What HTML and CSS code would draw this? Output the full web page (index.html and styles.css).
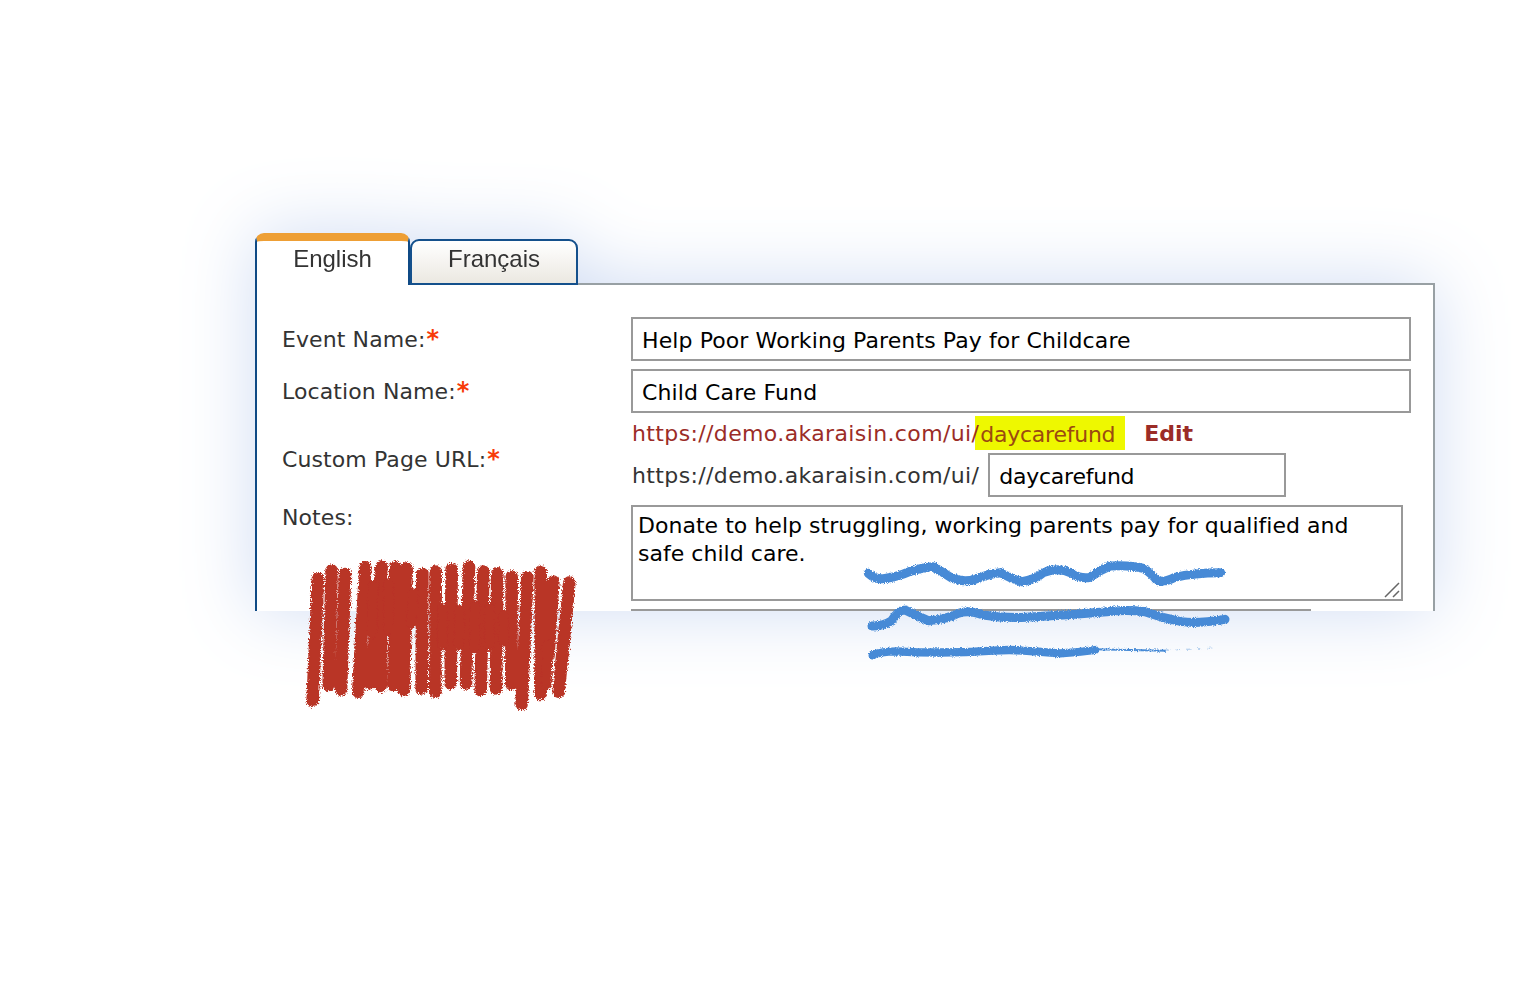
FILE: index.html
```html
<!DOCTYPE html>
<html lang="en">
<head>
<meta charset="utf-8">
<title>Event details</title>
<link rel="stylesheet" href="styles.css">
</head>
<body>
<div class="canvas">
  <div class="card">
    <div class="tabs">
      <div class="tab tab-active">English</div>
      <div class="tab tab-idle">Français</div>
    </div>
    <form class="panel">
      <div class="form-grid">
        <label class="label">Event Name:<span class="req">*</span></label>
        <input class="field" type="text" value="Help Poor Working Parents Pay for Childcare">
        <label class="label">Location Name:<span class="req">*</span></label>
        <input class="field" type="text" value="Child Care Fund">
        <label class="label label-url">Custom Page URL:<span class="req">*</span></label>
        <div class="url-cell">
          <div class="url-line"><span class="url-base">https://demo.akaraisin.com/ui/</span><mark class="url-slug">daycarefund</mark><a class="url-edit">Edit</a></div>
          <div class="url-edit-row"><span class="url-prefix">https://demo.akaraisin.com/ui/</span><input class="field field-slug" type="text" value="daycarefund"></div>
        </div>
        <label class="label label-notes">Notes:</label>
        <div class="notes-wrap">
          <textarea class="notes">Donate to help struggling, working parents pay for qualified and safe child care.</textarea>
          <svg class="grip" viewBox="0 0 16 16" aria-hidden="true"><path d="M1 15 L15 1 M9 15 L15 9"/></svg>
        </div>
        <span></span>
        <input class="field field-next" type="text">
      </div>
    </form>
  </div>

  <svg class="scribble scribble-red" viewBox="0 0 900 510" aria-hidden="true">
    <defs>
      <filter id="rough" x="-5%" y="-10%" width="110%" height="120%">
        <feTurbulence type="fractalNoise" baseFrequency="0.3" numOctaves="2" seed="4" result="n"/>
        <feDisplacementMap in="SourceGraphic" in2="n" scale="17" xChannelSelector="R" yChannelSelector="G"/>
      </filter>
    </defs>
    <g filter="url(#rough)">
      <path class="red-stroke" d="M84 85 L68 452 M125 62 L116 405 M165 72 L153 418 M226 52 L205 425 M275 50 L240 400 M272 60 L272 408 M316 52 L310 405 M350 55 L342 420 M397 72 L395 415 M437 65 L436 425 M485 58 L482 400 M537 50 L528 400 M580 65 L572 420 M622 70 L618 415 M665 80 L664 402 M712 82 L695 462 M752 65 L752 432 M790 95 L775 320 M838 98 L806 425"/>
      <path class="red-stroke red-fine" d="M250 105 L246 250 M296 100 L294 240 M370 130 L364 220 M458 175 L458 285 M510 180 L506 285 M556 170 L552 295 M600 175 L597 285 M642 195 L640 275 M772 285 L770 405"/>
    </g>
  </svg>

  <svg class="scribble scribble-blue" viewBox="0 0 1170 360" aria-hidden="true">
    <defs>
      <filter id="rough-blue" x="-2%" y="-30%" width="104%" height="160%">
        <feTurbulence type="fractalNoise" baseFrequency="0.35" numOctaves="2" seed="9" result="n"/>
        <feDisplacementMap in="SourceGraphic" in2="n" scale="11" xChannelSelector="R" yChannelSelector="G"/>
      </filter>
    </defs>
    <g filter="url(#rough-blue)">
      <path class="blue-stroke" d="M25 70 Q45 88 70 86 Q115 80 150 64 Q190 52 220 50 Q250 68 275 84 Q310 98 345 88 Q390 70 420 68 Q450 85 485 95 Q525 90 550 68 Q595 50 635 70 Q665 88 690 82 Q720 60 750 48 Q810 44 850 55 Q875 70 890 90 Q910 100 945 82 Q1000 68 1082 68"/>
      <path class="blue-stroke" d="M36 228 Q70 228 95 212 Q115 180 135 180 Q165 195 205 212 Q255 210 295 190 Q325 178 370 195 Q430 205 500 202 Q620 195 740 185 Q800 178 855 185 Q910 205 965 215 Q1010 222 1095 208"/>
      <path class="blue-stroke blue-thin" d="M38 316 Q55 305 110 304 Q250 312 400 302 Q450 298 490 302 Q540 305 600 310 Q650 308 705 300"/>
      <path class="blue-taper" d="M700 298 L920 302"/>
      <path class="blue-taper blue-faint" d="M915 301 L1065 294"/>
    </g>
  </svg>
</div>
</body>
</html>
```
FILE: styles.css
```css
* { box-sizing: border-box; }

html, body { margin: 0; background: #fff; }

.canvas {
  position: relative;
  width: 1520px;
  height: 997px;
  padding: 233px 0 0 255px;
  overflow: hidden;
}

.card {
  width: 1180px;
  filter: drop-shadow(0 0 36px #d0dcf3);
}

.tabs {
  display: flex;
  align-items: flex-end;
  height: 52px;
  margin-bottom: -2px;
  position: relative;
  z-index: 1;
}

.tab {
  display: flex;
  justify-content: center;
  font: 24px/1 "Liberation Sans", Arial, sans-serif;
  color: #333;
}

.tab-active {
  width: 155px;
  height: 52px;
  padding-top: 6px;
  background: #fff;
  border-top: 8px solid #ee9f35;
  border-left: 2px solid #0f4a85;
  border-right: 2px solid #0f4a85;
  border-radius: 9px 9px 0 0;
}

.tab-idle {
  width: 168px;
  height: 46px;
  padding-top: 6px;
  background: linear-gradient(#ffffff, #ebe8e1);
  border: 2px solid #14508c;
  border-radius: 9px 9px 0 0;
}

.panel {
  position: relative;
  height: 328px;
  padding: 32px 22px 0 25px;
  overflow: hidden;
  background: #fff;
  border-top: 2px solid #98a0a4;
  border-left: 2px solid #0f4a85;
  border-right: 2px solid #98a0a4;
}

.form-grid {
  display: grid;
  grid-template-columns: 349px 1fr;
  row-gap: 8px;
  align-items: center;
  font: 22px/28px "DejaVu Sans", Verdana, sans-serif;
  letter-spacing: .1px;
  color: #333;
}

.label { align-self: center; padding-top: 1px; }
.label-url { padding-top: 2px; }
.label-notes { align-self: start; margin-top: -1px; padding-top: 0; }
.req { font-size: 24px; line-height: 0; font-weight: 700; color: #f73b0a; margin-left: 1px; }

.field {
  display: block;
  width: 100%;
  height: 44px;
  margin: 0;
  padding: 2px 8px 0 9px;
  font: inherit;
  letter-spacing: inherit;
  color: #000;
  background: #fff;
  border: 2px solid #999;
  border-radius: 0;
  outline: none;
}

.url-cell {
  display: flex;
  flex-direction: column;
  margin-top: -8px;
}

.url-line {
  display: flex;
  align-items: center;
  height: 40px;
  padding-left: 1px;
  color: #9b2c27;
  white-space: nowrap;
}

.url-base { position: relative; padding-top: 2px; letter-spacing: .37px; }

.url-slug {
  display: block;
  height: 34px;
  margin-left: -4px;
  padding: 5px 10px 0 5px;
  letter-spacing: -.25px;
  color: #9b4a10;
  background: #eef800;
}

.url-edit {
  margin-left: 19px;
  padding-top: 2px;
  font-weight: 700;
  letter-spacing: 0;
  color: #9b2c27;
}

.url-edit-row {
  display: flex;
  align-items: center;
  column-gap: 9px;
  padding-left: 1px;
  white-space: nowrap;
}

.url-prefix { letter-spacing: .37px; padding-top: 2px; }

.field-slug { width: 298px; letter-spacing: -.25px; }

.notes-wrap { position: relative; width: 772px; height: 96px; }

.notes {
  display: block;
  width: 100%;
  height: 100%;
  margin: 0;
  padding: 5px;
  font: inherit;
  letter-spacing: .03px;
  color: #000;
  background: #fff;
  border: 2px solid #999;
  border-radius: 0;
  outline: none;
  resize: none;
}

.grip {
  position: absolute;
  right: 3px;
  bottom: 3px;
  width: 16px;
  height: 16px;
}
.grip path { fill: none; stroke: #666; stroke-width: 1.5; }

.field-next { width: 680px; }

.scribble { position: absolute; display: block; overflow: visible; }

.scribble-red { left: 290px; top: 550px; width: 300px; height: 170px; }
.scribble-blue { left: 860px; top: 550px; width: 390px; height: 120px; }

.red-stroke {
  fill: none;
  stroke: #b93426;
  stroke-width: 38;
  stroke-linecap: round;
}
.red-fine { stroke-width: 30; }

.blue-stroke {
  fill: none;
  stroke: #468ad6;
  stroke-width: 27;
  stroke-linejoin: round;
  stroke-linecap: round;
}
.blue-thin { stroke-width: 25; }
.blue-taper { fill: none; stroke: #468ad6; stroke-width: 6; }
.blue-faint { stroke-width: 2; stroke-dasharray: 14 18; opacity: .7; }
```
